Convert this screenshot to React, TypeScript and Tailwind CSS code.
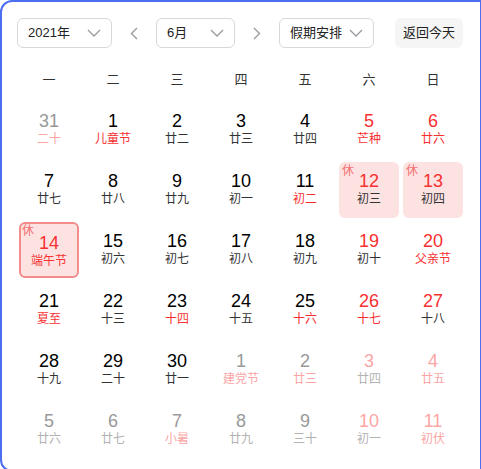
import React from "react";

type Cell = {
  d: string;
  l: string;
  nc: string; // number color class
  lc: string; // lunar color class
  hol?: boolean;
  sel?: boolean;
};

const BLK = "text-[#000000]";
const DRK = "text-[#333333]";
const RED = "text-[#f73131]";
const GRY = "text-[#999999]";
const LGR = "text-[#b3b3b3]";
const PNK = "text-[#fca5a5]";

const rows: Cell[][] = [
  [
    { d: "31", l: "二十", nc: GRY, lc: PNK },
    { d: "1", l: "儿童节", nc: BLK, lc: RED },
    { d: "2", l: "廿二", nc: BLK, lc: DRK },
    { d: "3", l: "廿三", nc: BLK, lc: DRK },
    { d: "4", l: "廿四", nc: BLK, lc: DRK },
    { d: "5", l: "芒种", nc: RED, lc: RED },
    { d: "6", l: "廿六", nc: RED, lc: RED },
  ],
  [
    { d: "7", l: "廿七", nc: BLK, lc: DRK },
    { d: "8", l: "廿八", nc: BLK, lc: DRK },
    { d: "9", l: "廿九", nc: BLK, lc: DRK },
    { d: "10", l: "初一", nc: BLK, lc: DRK },
    { d: "11", l: "初二", nc: BLK, lc: RED },
    { d: "12", l: "初三", nc: RED, lc: DRK, hol: true },
    { d: "13", l: "初四", nc: RED, lc: DRK, hol: true },
  ],
  [
    { d: "14", l: "端午节", nc: RED, lc: RED, hol: true, sel: true },
    { d: "15", l: "初六", nc: BLK, lc: DRK },
    { d: "16", l: "初七", nc: BLK, lc: DRK },
    { d: "17", l: "初八", nc: BLK, lc: DRK },
    { d: "18", l: "初九", nc: BLK, lc: DRK },
    { d: "19", l: "初十", nc: RED, lc: DRK },
    { d: "20", l: "父亲节", nc: RED, lc: RED },
  ],
  [
    { d: "21", l: "夏至", nc: BLK, lc: RED },
    { d: "22", l: "十三", nc: BLK, lc: DRK },
    { d: "23", l: "十四", nc: BLK, lc: RED },
    { d: "24", l: "十五", nc: BLK, lc: DRK },
    { d: "25", l: "十六", nc: BLK, lc: RED },
    { d: "26", l: "十七", nc: RED, lc: RED },
    { d: "27", l: "十八", nc: RED, lc: DRK },
  ],
  [
    { d: "28", l: "十九", nc: BLK, lc: DRK },
    { d: "29", l: "二十", nc: BLK, lc: DRK },
    { d: "30", l: "廿一", nc: BLK, lc: DRK },
    { d: "1", l: "建党节", nc: GRY, lc: PNK },
    { d: "2", l: "廿三", nc: GRY, lc: PNK },
    { d: "3", l: "廿四", nc: PNK, lc: LGR },
    { d: "4", l: "廿五", nc: PNK, lc: PNK },
  ],
  [
    { d: "5", l: "廿六", nc: GRY, lc: LGR },
    { d: "6", l: "廿七", nc: GRY, lc: LGR },
    { d: "7", l: "小暑", nc: GRY, lc: PNK },
    { d: "8", l: "廿九", nc: GRY, lc: LGR },
    { d: "9", l: "三十", nc: GRY, lc: LGR },
    { d: "10", l: "初一", nc: PNK, lc: LGR },
    { d: "11", l: "初伏", nc: PNK, lc: PNK },
  ],
];

const week = ["一", "二", "三", "四", "五", "六", "日"];

const FONT = {
  fontFamily:
    '"Liberation Sans", Arial, "Noto Sans CJK SC", sans-serif',
};

function ChevDown() {
  return (
    <svg width="14" height="8" viewBox="0 0 14 8" fill="none">
      <path d="M1 1l6 6 6-6" stroke="#9a9aa0" strokeWidth="1.3" />
    </svg>
  );
}

function Arrow({ dir }: { dir: "l" | "r" }) {
  return (
    <svg width="8" height="13" viewBox="0 0 8 13" fill="none">
      {dir === "l" ? (
        <path d="M7 1L1.5 6.5 7 12" stroke="#9a9aa0" strokeWidth="1.4" />
      ) : (
        <path d="M1 1l5.5 5.5L1 12" stroke="#9a9aa0" strokeWidth="1.4" />
      )}
    </svg>
  );
}

function Select({ label, w }: { label: string; w: string }) {
  return (
    <div
      className={`${w} h-[30px] flex items-center justify-between pl-[10px] pr-[10px] border border-[#d7d8dc] rounded-[6px] text-[13px] text-[#222222]`}
    >
      <span>{label}</span>
      <ChevDown />
    </div>
  );
}

export default function App() {
  return (
    <div className="w-[481px] h-[472px] bg-white" style={FONT}>
      <div className="w-[481px] h-[472px] border-t-2 border-l-2 border-b-2 border-r border-[#4e6ef2] rounded-l-[12px] pl-[15px] pt-[16px]">
        <div className="flex items-center h-[30px]">
          <Select label="2021年" w="w-[95px]" />
          <div className="w-[44px] flex justify-center">
            <Arrow dir="l" />
          </div>
          <Select label="6月" w="w-[79px]" />
          <div className="w-[44px] flex justify-center">
            <Arrow dir="r" />
          </div>
          <Select label="假期安排" w="w-[95px]" />
          <div className="ml-[21px] w-[68px] h-[30px] rounded-[6px] bg-[#f5f5f6] flex items-center justify-center text-[13px] text-[#222222]">
            返回今天
          </div>
        </div>
        <div className="mt-[12px] grid grid-cols-[repeat(7,64px)] h-[40px] items-center">
          {week.map((w) => (
            <div key={w} className="text-center text-[13px] text-[#333333]">
              {w}
            </div>
          ))}
        </div>
        <div className="grid grid-cols-[repeat(7,64px)] grid-rows-[repeat(6,60px)]">
          {rows.flat().map((c, i) => (
            <div key={i} className="p-[2px]">
              <div
                className={`relative w-[60px] h-[56px] rounded-[6px] flex flex-col items-center pt-[8px] ${
                  c.hol ? "bg-[#fde2e2]" : ""
                } ${c.sel ? "border-2 border-[#f28b8b] pt-[6px]" : ""}`}
              >
                {c.hol && (
                  <span
                    className={`absolute ${
                      c.sel ? "left-[1px] top-[0px]" : "left-[3px] top-[2px]"
                    } text-[12px] leading-[14px] text-[#f37070]`}
                  >
                    休
                  </span>
                )}
                <span className={`text-[18px] leading-[22px] ${c.nc}`}>
                  {c.d}
                </span>
                <span className={`text-[12px] leading-[14px] ${c.lc}`}>
                  {c.l}
                </span>
              </div>
            </div>
          ))}
        </div>
      </div>
    </div>
  );
}
